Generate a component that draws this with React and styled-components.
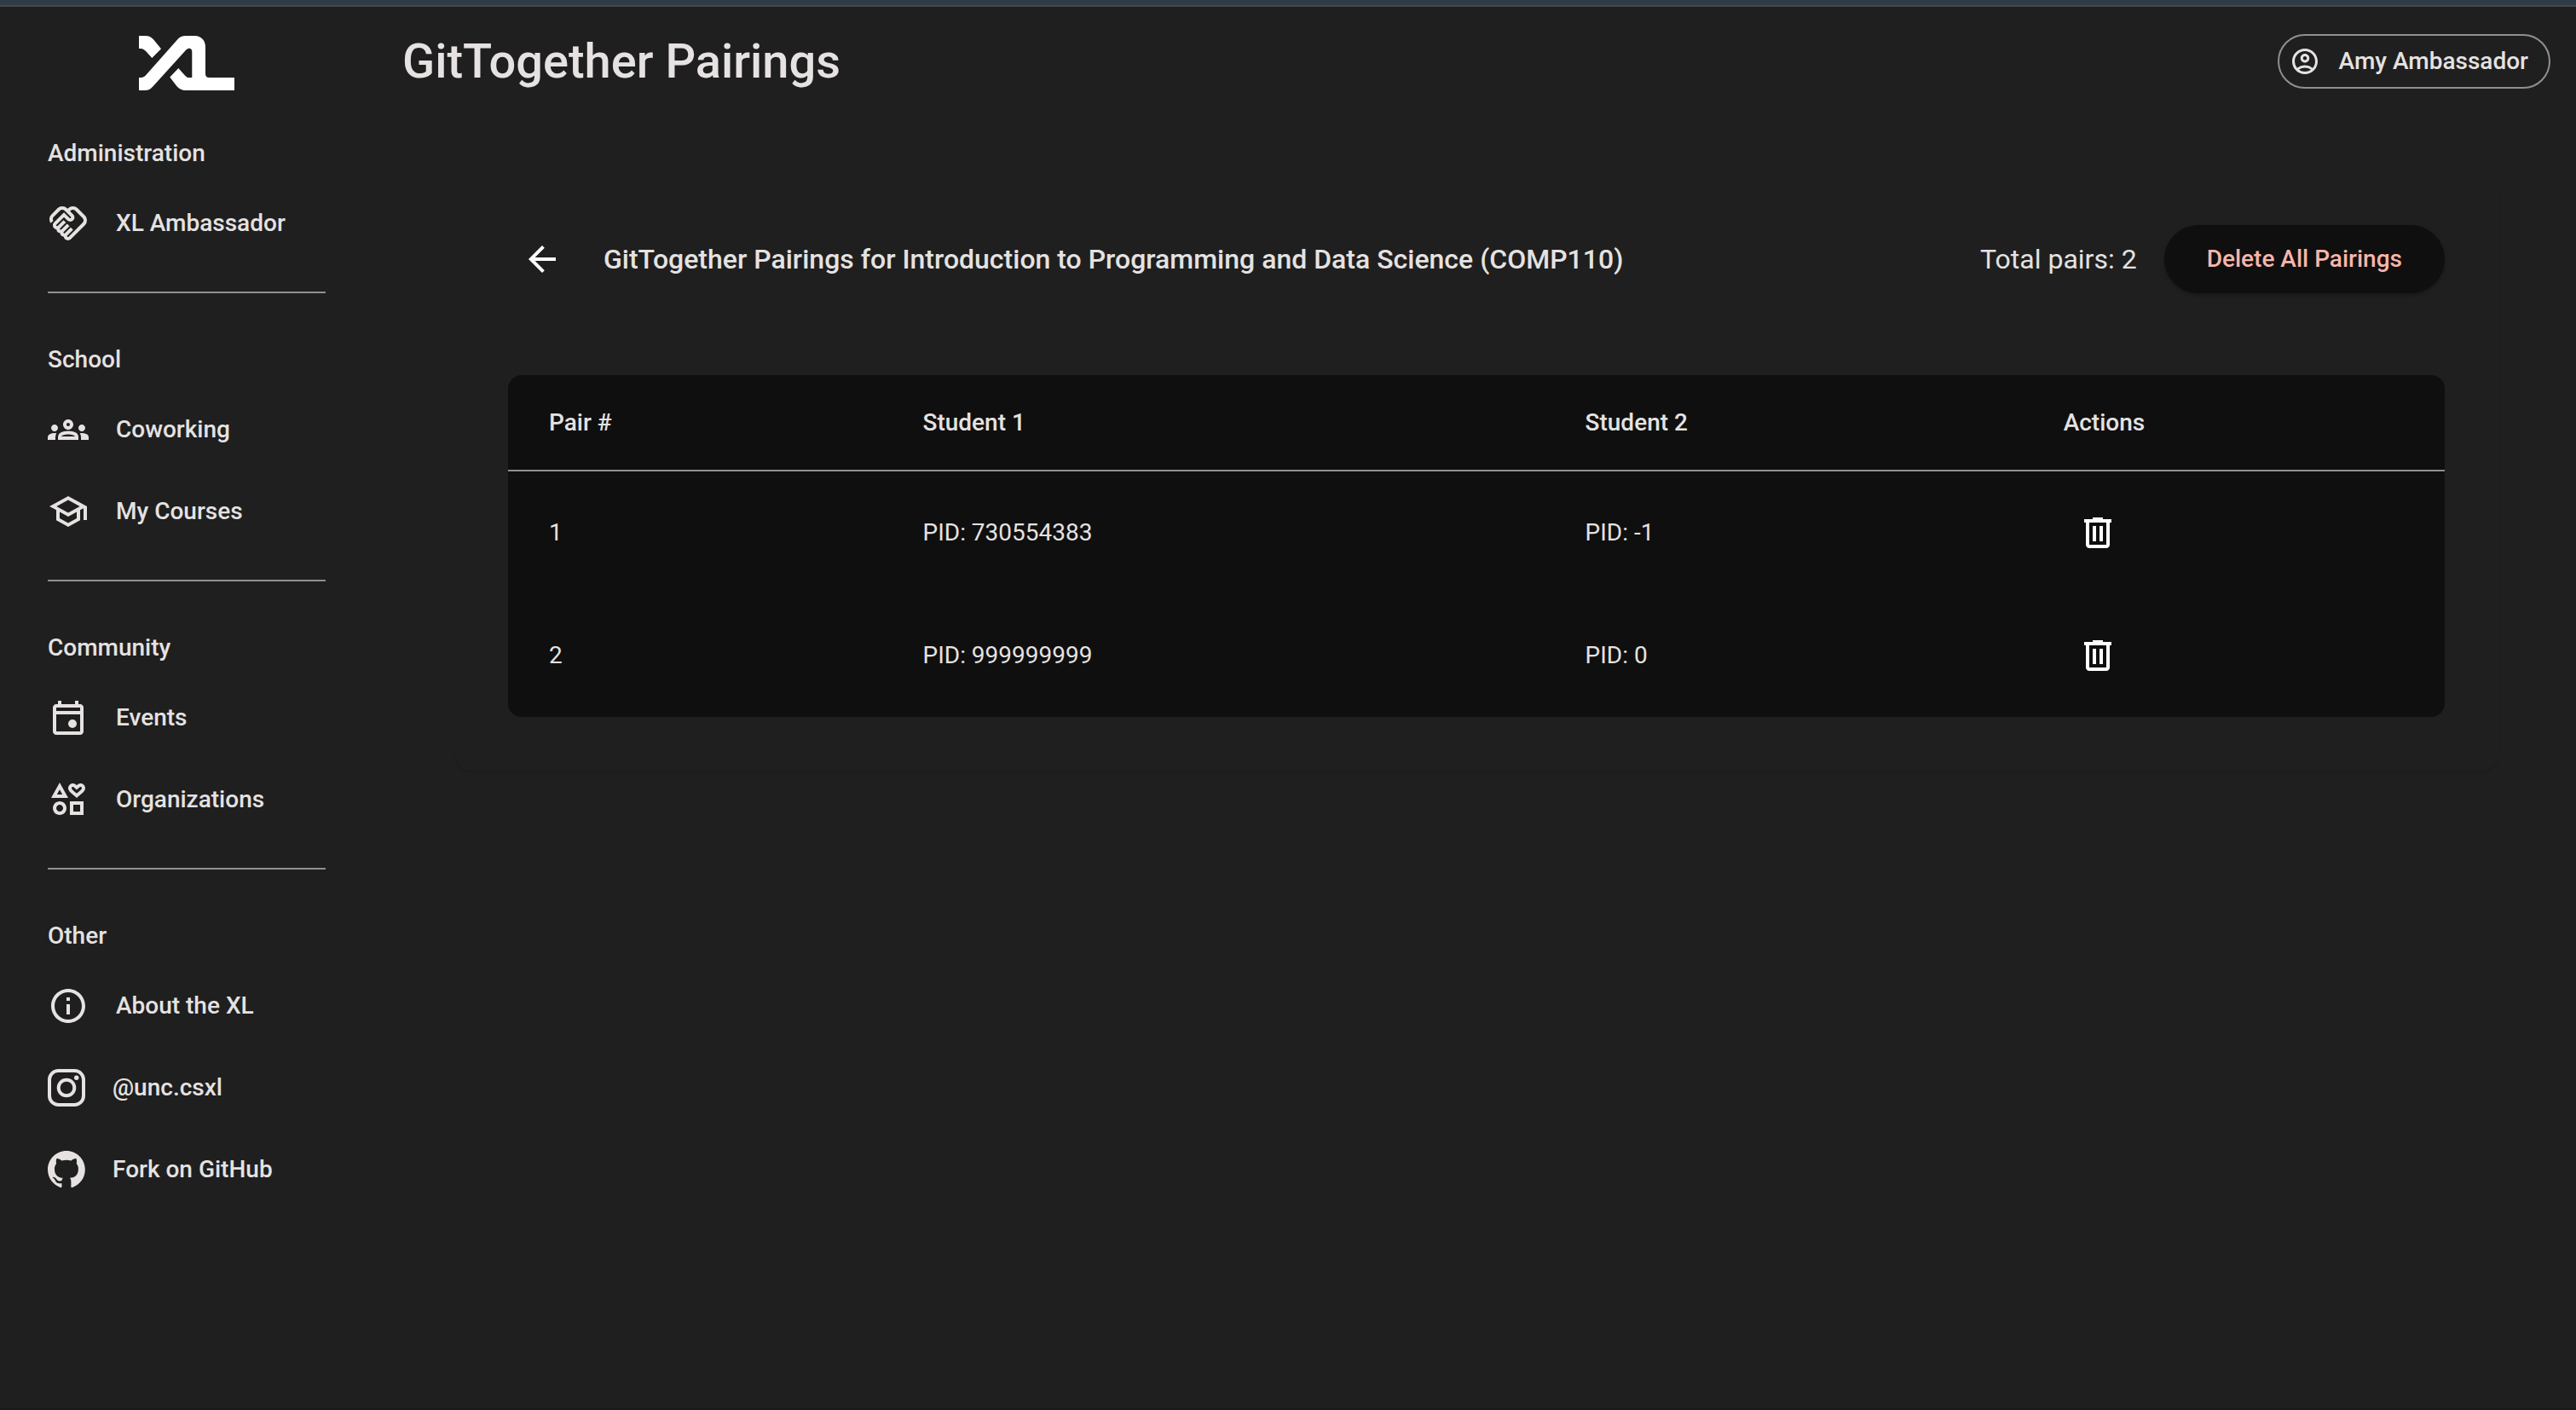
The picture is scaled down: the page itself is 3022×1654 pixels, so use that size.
import React from "react";
import styled, { createGlobalStyle } from "styled-components";
import {
  MdOutlineHandshake,
  MdOutlineGroups,
  MdOutlineSchool,
  MdOutlineInterests,
  MdOutlineInfo,
  MdOutlineAccountCircle,
  MdArrowBack,
} from "react-icons/md";

const color = {
  page: "#1f1f1f",
  surface: "#0f0f0f",
  text: "#e5e2e1",
  line: "#919090",
  danger: "#f7b6ab",
};

const GlobalStyle = createGlobalStyle`
  *, *::before, *::after { box-sizing: border-box; }
  body {
    margin: 0;
    background: ${color.page};
    color: ${color.text};
    font-family: Roboto, "Liberation Sans", sans-serif;
    font-size: 28px;
    line-height: 40px;
  }
  button { font: inherit; color: inherit; border: 0; background: none; padding: 0; cursor: pointer; }
  a { color: inherit; text-decoration: none; }
  svg { display: block; flex: none; }
`;

const Page = styled.div`
  display: flex;
  flex-direction: column;
  min-height: 100vh;
  border-bottom: 2px solid #1c181b;
`;

const TopStrip = styled.div`
  height: 8px;
  background: #2e3d45;
  border-bottom: 2px solid #46484c;
`;

const Shell = styled.div`
  display: flex;
  flex: 1;
`;

const Sidebar = styled.nav`
  width: 442px;
  flex: none;
  padding: 34px 60px 32px 56px;
`;

const LogoLink = styled.a`
  display: flex;
  justify-content: center;
  margin-bottom: 50px;
`;

const NavSection = styled.section`
  & + & {
    margin-top: 32px;
    padding-top: 54px;
    border-top: 2px solid ${color.line};
  }
`;

const NavHeading = styled.h2`
  margin: 0 0 10px;
  font-size: 28px;
  line-height: 48px;
  font-weight: 500;
`;

const NavList = styled.ul`
  list-style: none;
  margin: 0;
  padding: 0;
`;

const NavLink = styled.a`
  display: flex;
  align-items: center;
  gap: 32px;
  height: 96px;
  font-weight: 500;
  white-space: nowrap;
`;

const Main = styled.main`
  flex: 1;
  min-width: 0;
`;

const Header = styled.header`
  display: flex;
  align-items: center;
  justify-content: space-between;
  height: 128px;
  padding: 0 30px;
`;

const Title = styled.h1`
  margin: 0;
  font-size: 56px;
  line-height: 64px;
  font-weight: 500;
`;

const UserButton = styled.button`
  display: flex;
  align-items: center;
  gap: 22px;
  height: 64px;
  padding: 0 24px 0 12px;
  border: 2px solid ${color.line};
  border-radius: 32px;
  font-weight: 500;
`;

const Card = styled.section`
  max-width: 2400px;
  margin: 64px auto;
  padding: 64px;
  border-radius: 24px;
  background: ${color.page};
  box-shadow: 0 2px 2px rgba(0, 0, 0, 0.08);
`;

const CardHeader = styled.div`
  display: flex;
  align-items: center;
  gap: 32px;
  margin-bottom: 96px;
`;

const CardTitle = styled.h2`
  flex: 1;
  margin: 0;
  font-size: 32px;
  line-height: 48px;
  font-weight: 500;
`;

const Total = styled.span`
  font-size: 32px;
  line-height: 48px;
`;

const IconButton = styled.button`
  display: grid;
  place-items: center;
  width: 80px;
  height: 80px;
  border-radius: 50%;
  color: #fff;
`;

const DeleteAllButton = styled.button`
  height: 80px;
  padding: 0 50px;
  border-radius: 40px;
  background: ${color.surface};
  color: ${color.danger};
  font-weight: 500;
  box-shadow: 0 2px 4px rgba(0, 0, 0, 0.3);
`;

const Table = styled.table`
  width: 100%;
  table-layout: fixed;
  border-collapse: separate;
  border-spacing: 0;
  border-radius: 16px;
  background: ${color.surface};
  overflow: hidden;
`;

const Col = styled.col`
  width: ${(p) => p.$width};
`;

const HeadCell = styled.th`
  height: 113px;
  padding: 0 0 0 48px;
  border-bottom: 2px solid ${color.line};
  font-weight: 500;
  text-align: left;
`;

const Cell = styled.td`
  height: 144px;
  padding: 0 0 0 48px;
`;

const Logo = () => (
  <svg width="112" height="64" viewBox="0 0 112 64" fill="#fff" aria-hidden="true">
    <path d="M0 0H7.500C11.500 0 14.500 1.500 17 4.300L26 15.200L15.300 26L8.300 18.300C5.800 15.600 4 15 0 15Z" />
    <path
      fillRule="evenodd"
      d="M0 49C4.500 49 6 48.500 8.500 45.700L45.300 4.200C48 1.300 50.500 0 55 0H65.500C73 0 78 5.500 78 13V44.500C78 47.500 79.500 49 82.500 49H112V64H55C50.500 64 47.300 62.300 44.300 59L36.300 48.500L46.300 38L53.500 46C55.800 48.500 56.500 49 59.500 49H62.300V18.500C62.300 14.500 58.500 13.500 55.300 16.500L16.300 59.500C13.500 62.600 11 64 7 64H0Z"
    />
  </svg>
);

const EventIcon = () => (
  <svg width="48" height="48" viewBox="0 -960 960 960" fill="currentColor" aria-hidden="true">
    <path d="M580-240q-42 0-71-29t-29-71q0-42 29-71t71-29q42 0 71 29t29 71q0 42-29 71t-71 29ZM200-80q-33 0-56.500-23.500T120-160v-560q0-33 23.500-56.500T200-800h40v-80h80v80h320v-80h80v80h40q33 0 56.500 23.500T840-720v560q0 33-23.500 56.500T760-80H200Zm0-80h560v-400H200v400Zm0-480h560v-80H200v80Z" />
  </svg>
);

const DeleteIcon = () => (
  <svg width="48" height="48" viewBox="0 -960 960 960" fill="currentColor" aria-hidden="true">
    <path d="M280-120q-33 0-56.500-23.500T200-200v-520h-40v-80h200v-40h240v40h200v80h-40v520q0 33-23.500 56.500T680-120H280Zm400-600H280v520h400v-520ZM360-280h80v-360h-80v360Zm160 0h80v-360h-80v360Z" />
  </svg>
);

const InstagramIcon = () => (
  <svg width="44" height="44" viewBox="0 0 44 44" fill="none" stroke="currentColor" strokeWidth="4" aria-hidden="true">
    <rect x="2" y="2" width="40" height="40" rx="10.500" />
    <circle cx="22" cy="22" r="9.300" />
    <circle cx="33.700" cy="10.300" r="2.700" fill="currentColor" stroke="none" />
  </svg>
);

const GitHubIcon = () => (
  <svg width="44" height="44" viewBox="0 0 98 98" fill="currentColor" aria-hidden="true">
    <path d="M48.854 0C21.839 0 0 22 0 49.217c0 21.756 13.993 40.172 33.405 46.690 2.427.490 3.316-1.059 3.316-2.362 0-1.141-.080-5.052-.080-9.127-13.590 2.934-16.420-5.867-16.420-5.867-2.184-5.704-5.420-7.170-5.420-7.170-4.448-3.015.324-3.015.324-3.015 4.934.326 7.523 5.052 7.523 5.052 4.367 7.496 11.404 5.378 14.235 4.074.404-3.178 1.699-5.378 3.074-6.600-10.839-1.141-22.243-5.378-22.243-24.283 0-5.378 1.940-9.778 5.014-13.200-.485-1.222-2.184-6.275.486-13.038 0 0 4.125-1.304 13.426 5.052a46.970 46.970 0 0 1 12.214-1.630c4.125 0 8.330.571 12.213 1.630 9.302-6.356 13.427-5.052 13.427-5.052 2.670 6.763.970 11.816.485 13.038 3.155 3.422 5.015 7.822 5.015 13.200 0 18.905-11.404 23.060-22.324 24.283 1.780 1.548 3.316 4.481 3.316 9.126 0 6.600-.080 11.897-.080 13.526 0 1.304.890 2.853 3.316 2.364 19.412-6.520 33.405-24.935 33.405-46.691C97.707 22 75.788 0 48.854 0z" />
  </svg>
);

const sections = [
  { title: "Administration", links: [["XL Ambassador", <MdOutlineHandshake size={48} />]] },
  {
    title: "School",
    links: [
      ["Coworking", <MdOutlineGroups size={48} />],
      ["My Courses", <MdOutlineSchool size={48} />],
    ],
  },
  {
    title: "Community",
    links: [
      ["Events", <EventIcon />],
      ["Organizations", <MdOutlineInterests size={48} />],
    ],
  },
  {
    title: "Other",
    links: [
      ["About the XL", <MdOutlineInfo size={48} />],
      ["@unc.csxl", <InstagramIcon />],
      ["Fork on GitHub", <GitHubIcon />],
    ],
  },
];

const pairings = [
  { id: 1, first: "PID: 730554383", second: "PID: -1" },
  { id: 2, first: "PID: 999999999", second: "PID: 0" },
];

export default function App() {
  return (
    <Page>
      <GlobalStyle />
      <TopStrip />
      <Shell>
        <Sidebar aria-label="Main">
          <LogoLink href="#" aria-label="XL home">
            <Logo />
          </LogoLink>
          {sections.map((section) => (
            <NavSection key={section.title}>
              <NavHeading>{section.title}</NavHeading>
              <NavList>
                {section.links.map(([label, icon]) => (
                  <li key={label}>
                    <NavLink href="#">
                      {icon}
                      <span>{label}</span>
                    </NavLink>
                  </li>
                ))}
              </NavList>
            </NavSection>
          ))}
        </Sidebar>
        <Main>
          <Header>
            <Title>GitTogether Pairings</Title>
            <UserButton type="button">
              <MdOutlineAccountCircle size={36} />
              <span>Amy Ambassador</span>
            </UserButton>
          </Header>
          <Card>
            <CardHeader>
              <IconButton type="button" aria-label="Back">
                <MdArrowBack size={48} />
              </IconButton>
              <CardTitle>
                GitTogether Pairings for Introduction to Programming and Data Science (COMP110)
              </CardTitle>
              <Total>Total pairs: 2</Total>
              <DeleteAllButton type="button">Delete All Pairings</DeleteAllButton>
            </CardHeader>
            <Table>
              <colgroup>
                <Col $width="19.3%" />
                <Col $width="34.2%" />
                <Col $width="24.7%" />
                <Col $width="21.8%" />
              </colgroup>
              <thead>
                <tr>
                  <HeadCell scope="col">Pair #</HeadCell>
                  <HeadCell scope="col">Student 1</HeadCell>
                  <HeadCell scope="col">Student 2</HeadCell>
                  <HeadCell scope="col">Actions</HeadCell>
                </tr>
              </thead>
              <tbody>
                {pairings.map((pair) => (
                  <tr key={pair.id}>
                    <Cell>{pair.id}</Cell>
                    <Cell>{pair.first}</Cell>
                    <Cell>{pair.second}</Cell>
                    <Cell>
                      <IconButton type="button" aria-label={`Delete pair ${pair.id}`}>
                        <DeleteIcon />
                      </IconButton>
                    </Cell>
                  </tr>
                ))}
              </tbody>
            </Table>
          </Card>
        </Main>
      </Shell>
    </Page>
  );
}
